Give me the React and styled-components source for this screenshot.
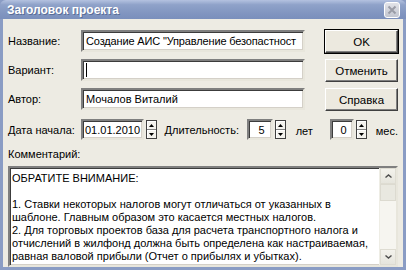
import React from "react";
import styled, { createGlobalStyle, css } from "styled-components";

const Global = createGlobalStyle`
  html, body { margin: 0; padding: 0; background: #edebe3; }
  body { font-family: "Liberation Sans", Arial, sans-serif; font-size: 11px; color: #000; }
`;

const Window = styled.div`
  width: 406px;
  height: 270px;
  box-sizing: border-box;
  display: flex;
  flex-direction: column;
  background: #8a9cc4;
  padding: 0 3px 3px 3px;
  overflow: hidden;
`;

const TitleBar = styled.div`
  height: 22px;
  margin: 0 -3px;
  padding: 0 6px 0 7px;
  display: flex;
  align-items: center;
  justify-content: space-between;
  background: linear-gradient(to bottom, #b4c2e0 0%, #8fa2c9 25%, #8195c0 70%, #7a8fbc 100%);
  border-radius: 6px 6px 0 0;
`;

const Title = styled.span`
  color: #fff;
  font-weight: bold;
  font-size: 12px;
  text-shadow: 1px 1px 0 #5a6d97;
`;

const CloseBtn = styled.div`
  width: 16px;
  height: 16px;
  box-sizing: border-box;
  border: 1px solid #fff;
  border-radius: 3px;
  background: linear-gradient(to bottom, #e2e3e8, #c3c6d0);
  display: flex;
  align-items: center;
  justify-content: center;
`;

const Body = styled.div`
  flex: 1;
  background: #edebe3;
  padding: 11px 5px 0 5px;
  display: flex;
  flex-direction: column;
`;

const Top = styled.div`
  display: flex;
  gap: 20px;
`;

const Fields = styled.div`
  display: flex;
  flex-direction: column;
  gap: 7px;
`;

const Buttons = styled.div`
  display: flex;
  flex-direction: column;
  gap: 6px;
`;

const Row = styled.div`
  display: flex;
  align-items: center;
  height: 22px;
`;

const Label = styled.span`
  width: 73px;
  flex-shrink: 0;
  white-space: nowrap;
`;

const sunken = css`
  box-sizing: border-box;
  background: #fff;
  border-style: solid;
  border-width: 2px;
  border-color: #7f7f7f #e8e6dc #e8e6dc #7f7f7f;
  box-shadow: inset 1px 1px 0 #3c3c3c, inset -1px -1px 0 #d4d0c8;
`;

const Input = styled.div`
  ${sunken};
  width: ${(p) => p.$w}px;
  height: ${(p) => p.$h || 22}px;
  margin-left: ${(p) => p.$ml || 0}px;
  padding: 0 0 0 ${(p) => p.$pl || 3}px;
  display: flex;
  align-items: center;
  justify-content: ${(p) => (p.$center ? "center" : "flex-start")};
  font-size: 11px;
  letter-spacing: ${(p) => (p.$tight ? "-0.15px" : "0")};
  white-space: nowrap;
  overflow: hidden;
`;

const Caret = styled.span`
  width: 1px;
  height: 14px;
  background: #000;
`;

const Button = styled.div`
  width: 73px;
  height: 23px;
  box-sizing: border-box;
  display: flex;
  align-items: center;
  justify-content: center;
  font-size: 11.5px;
  background: #ece9df;
  border-style: solid;
  border-width: 1px;
  border-color: #fff #404040 #404040 #fff;
  box-shadow: inset -1px -1px 0 #808080;
  ${(p) =>
    p.$default &&
    css`
      outline: 1px solid #000;
    `}
`;

const SpinBox = styled.div`
  width: 11px;
  height: 19px;
  margin-left: 2px;
  box-sizing: border-box;
  border: 1px solid #404040;
  background: #f4f3ee;
  display: flex;
  flex-direction: column;
`;

const SpinHalf = styled.div`
  flex: 1;
  display: flex;
  align-items: center;
  justify-content: center;
  border-top: ${(p) => (p.$bottom ? "1px solid #808080" : "none")};
  box-shadow: inset 1px 1px 0 #fff;
`;

const DateRow = styled(Row)`
  margin-top: 8px;
  height: 21px;
`;

const Text = styled.span`
  margin-left: ${(p) => p.$ml || 0}px;
  white-space: nowrap;
  ${(p) => p.$low && "align-self: flex-end; padding-bottom: 3px;"}
`;

const CommentLabel = styled.div`
  margin-top: 8px;
  height: 13px;
`;

const Memo = styled.div`
  ${sunken};
  margin-top: 5px;
  width: 390px;
  height: 101px;
  display: flex;
`;

const MemoText = styled.div`
  flex: 1;
  padding: 4px 2px 0 2px;
  font-size: 11px;
  line-height: 13px;
  white-space: pre;
  overflow: hidden;
`;

const ScrollBar = styled.div`
  width: 16px;
  background: #f6f5f0;
  display: flex;
  flex-direction: column;
  border-left: 1px solid #eeede5;
`;

const ScrollBtn = styled.div`
  height: 16px;
  box-sizing: border-box;
  background: linear-gradient(to bottom, #f3f2ec, #e6e5dd);
  border: 1px solid #dedcd2;
  display: flex;
  align-items: center;
  justify-content: center;
`;

const Thumb = styled.div`
  height: 17px;
  box-sizing: border-box;
  background: #e9e8e0;
  border: 1px solid #dcdad0;
`;

const Track = styled.div`
  flex: 1;
`;

const Tri = ({ down }) => (
  <svg width="5" height="3" viewBox="0 0 5 3">
    <path d={down ? "M0 0h5L2.5 3z" : "M0 3h5L2.5 0z"} fill="#000" />
  </svg>
);

const Chevron = ({ down }) => (
  <svg width="7" height="4" viewBox="0 0 7 4">
    <path
      d={down ? "M0.5 0.5L3.5 3L6.5 0.5" : "M0.5 3.5L3.5 1L6.5 3.5"}
      fill="none"
      stroke="#4d4d4d"
      strokeWidth="1.4"
    />
  </svg>
);

const Spin = () => (
  <SpinBox>
    <SpinHalf>
      <Tri />
    </SpinHalf>
    <SpinHalf $bottom>
      <Tri down />
    </SpinHalf>
  </SpinBox>
);

const memo = `ОБРАТИТЕ ВНИМАНИЕ:

1. Ставки некоторых налогов могут отличаться от указанных в
шаблоне. Главным образом это касается местных налогов.
2. Для торговых проектов база для расчета транспортного налога и
отчислений в жилфонд должна быть определена как настраиваемая,
равная валовой прибыли (Отчет о прибылях и убытках).`;

export default function App() {
  return (
    <>
      <Global />
      <Window>
        <TitleBar>
          <Title>Заголовок проекта</Title>
          <CloseBtn>
            <svg width="10" height="10" viewBox="0 0 10 10">
              <path d="M1.5 1.5L8.5 8.5M8.5 1.5L1.5 8.5" stroke="#9a9ca6" strokeWidth="2" />
            </svg>
          </CloseBtn>
        </TitleBar>
        <Body>
          <Top>
            <Fields>
              <Row>
                <Label>Название:</Label>
                <Input $w={224} $tight>Создание АИС "Управление безопастност</Input>
              </Row>
              <Row>
                <Label>Вариант:</Label>
                <Input $w={224}>
                  <Caret />
                </Input>
              </Row>
              <Row>
                <Label>Автор:</Label>
                <Input $w={224}>Мочалов Виталий</Input>
              </Row>
            </Fields>
            <Buttons>
              <Button $default>OK</Button>
              <Button>Отменить</Button>
              <Button>Справка</Button>
            </Buttons>
          </Top>
          <DateRow>
            <Label>Дата начала:</Label>
            <Input $w={68} $h={21} $pl={2}>01.01.2010</Input>
            <Spin />
            <Text $ml={8}>Длительность:</Text>
            <Input $w={28} $h={21} $center $ml={8}>5</Input>
            <Spin />
            <Text $ml={10} $low>лет</Text>
            <Input $w={26} $h={21} $center $ml={17}>0</Input>
            <Spin />
            <Text $ml={9} $low>мес.</Text>
          </DateRow>
          <CommentLabel>Комментарий:</CommentLabel>
          <Memo>
            <MemoText>{memo}</MemoText>
            <ScrollBar>
              <ScrollBtn>
                <Chevron />
              </ScrollBtn>
              <Thumb />
              <Track />
              <ScrollBtn>
                <Chevron down />
              </ScrollBtn>
            </ScrollBar>
          </Memo>
        </Body>
      </Window>
    </>
  );
}
